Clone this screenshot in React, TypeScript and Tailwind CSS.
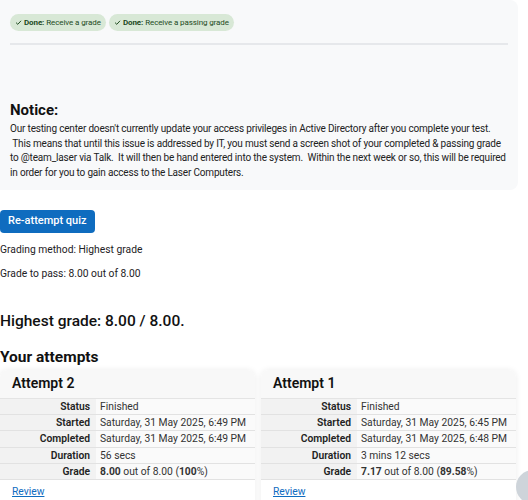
import React from "react";

const attempts = [
  {
    title: "Attempt 2",
    started: "Saturday, 31 May 2025, 6:49 PM",
    completed: "Saturday, 31 May 2025, 6:49 PM",
    duration: "56 secs",
    grade: "8.00",
    pct: "100",
  },
  {
    title: "Attempt 1",
    started: "Saturday, 31 May 2025, 6:45 PM",
    completed: "Saturday, 31 May 2025, 6:48 PM",
    duration: "3 mins 12 secs",
    grade: "7.17",
    pct: "89.58",
  },
];

function Badge({ text }: { text: string }) {
  return (
    <span className="flex items-center gap-[2px] h-[17px] px-[5px] rounded-full bg-[#d8e8d6] text-[#1d4a1d] text-[8px] tracking-[-0.1px]">
      <svg width="7" height="7" viewBox="0 0 10 10" fill="none" stroke="currentColor" strokeWidth="1.4">
        <path d="M1.5 5.2 L4 7.6 L8.6 2.6" />
      </svg>
      <b className="font-bold">Done:</b>
      <span>{text}</span>
    </span>
  );
}

function AttemptCard({ a }: { a: (typeof attempts)[number] }) {
  const rows: [string, React.ReactNode][] = [
    ["Status", "Finished"],
    ["Started", a.started],
    ["Completed", a.completed],
    ["Duration", a.duration],
    [
      "Grade",
      <span>
        <b className="font-bold">{a.grade}</b> out of 8.00 (<b className="font-bold">{a.pct}</b>%)
      </span>,
    ],
  ];
  return (
    <div className="w-[255px] rounded-t-lg bg-white shadow-[0_0_6px_rgba(0,0,0,0.08)]">
      <div className="h-[28px] flex items-end pb-[4px] pl-[12px] bg-[#f8f8f8] rounded-t-lg text-[14px] font-semibold text-[#111]">
        {a.title}
      </div>
      <div className="border-t border-[#e4e4e4]">
        {rows.map(([k, v]) => (
          <div key={k} className="flex h-[16.3px] border-b border-[#e2e2e2] text-[10.3px] leading-[15.5px]">
            <div className="w-[96px] shrink-0 text-right pr-[6px] font-semibold bg-[#f2f2f2] text-[#222]">{k}</div>
            <div className="pl-[4px] text-[#333] bg-[#fafafa] flex-1">{v}</div>
          </div>
        ))}
      </div>
      <div className="pl-[12px] pt-[4px] pb-[6px] text-[10.3px]">
        <span className="text-[#0f6cbf] underline">Review</span>
      </div>
    </div>
  );
}

export default function App() {
  return (
    <div className="relative w-[528px] h-[500px] overflow-hidden bg-white text-[#1d2125]" style={{ fontFamily: "Roboto, 'Liberation Sans', sans-serif" }}>
      <div className="w-[518px] h-[190px] bg-[#f8f9fa] rounded-br-lg rounded-tr-lg pl-[10px] pr-[8px]">
        <div className="flex gap-[3px] pt-[14px]">
          <Badge text="Receive a grade" />
          <Badge text="Receive a passing grade" />
        </div>
        <div className="mt-[12px] mr-[2px] h-[2px] bg-[#e6e8eb]" />
        <h3 className="mt-[56px] text-[15px] font-bold text-[#111] leading-[18px]">Notice:</h3>
        <p className="mt-[3px] text-[10px] leading-[14.5px] text-[#222] tracking-[-0.18px]">
          Our testing center doesn't currently update your access privileges in Active Directory after you complete your test.
          <br />
          &nbsp;This means that until this issue is addressed by IT, you must send a screen shot of your completed &amp; passing grade to @team_laser via Talk.&nbsp; It will then be hand entered into the system.&nbsp; Within the next week or so, this will be required in order for you to gain access to the Laser Computers.
        </p>
      </div>

      <div className="mt-[17px]">
        <button className="h-[23px] px-[8px] rounded-[4px] bg-[#0f6cbf] text-white text-[11px] font-medium">
          Re-attempt quiz
        </button>
        <p className="mt-[10px] text-[10.3px] leading-[14px]">Grading method: Highest grade</p>
        <p className="mt-[10px] text-[10.3px] leading-[14px]">Grade to pass: 8.00 out of 8.00</p>
        <h3 className="mt-[30px] text-[15.5px] font-medium leading-[20px] text-[#111]">Highest grade: 8.00 / 8.00.</h3>
        <h3 className="mt-[16px] text-[15.5px] font-bold leading-[20px] text-[#111]">Your attempts</h3>
        <div className="mt-[3px] flex gap-[6px]">
          {attempts.map((a) => (
            <AttemptCard key={a.title} a={a} />
          ))}
        </div>
      </div>

      <div className="absolute left-[516px] top-[470px] w-[34px] h-[34px] rounded-full bg-[#ced4da]" />
    </div>
  );
}
